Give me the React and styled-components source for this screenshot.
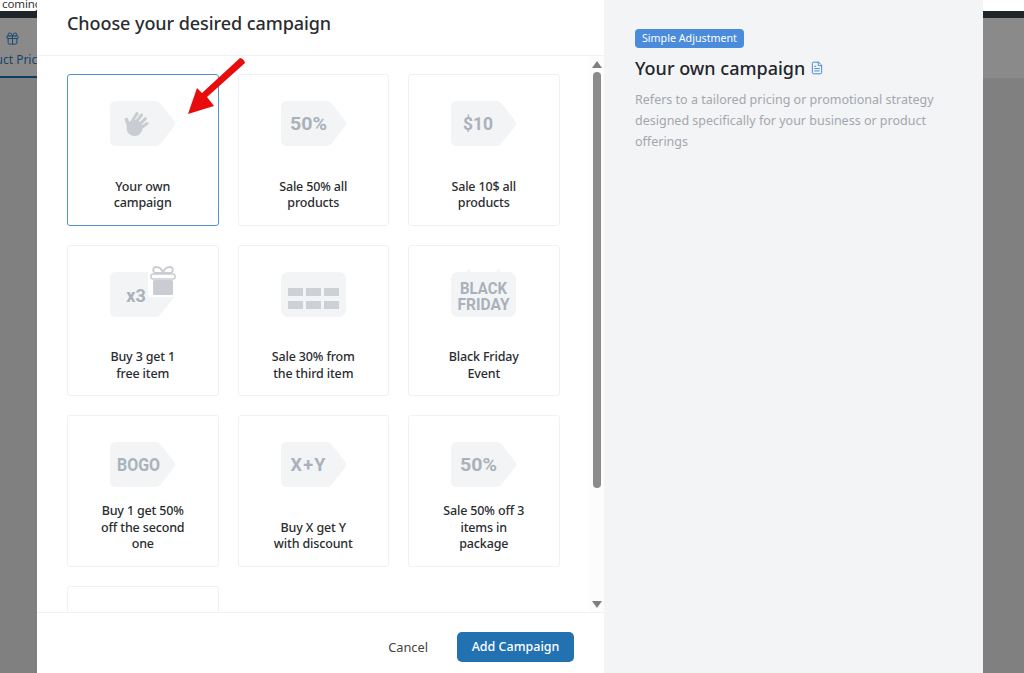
import React from 'react'
import styled, { createGlobalStyle } from 'styled-components'
import { Gift, FileText } from 'lucide-react'

const GlobalStyle = createGlobalStyle`
  html, body {
    margin: 0;
    height: 100%;
    overflow: hidden;
    font-family: "Noto Sans", "Open Sans", sans-serif;
  }
`

const Page = styled.div`
  position: relative;
  width: 1024px;
  height: 673px;
  overflow: hidden;
  background: #808080;
`

const TopBar = styled.div`
  height: 18px;
  background: #1f2529;
`

const Notice = styled.div`
  height: 11px;
  padding-left: 2px;
  overflow: hidden;
  background: #ffffff;
  color: #333;
  font-size: 11.5px;
  line-height: 8px;
  letter-spacing: -0.1px;
  white-space: nowrap;
`

const TabStrip = styled.div`
  height: 60px;
  box-sizing: border-box;
  background: #8a8a8a;
`

const Tab = styled.div`
  display: flex;
  flex-direction: column;
  align-items: center;
  width: 104px;
  height: 60px;
  box-sizing: border-box;
  margin-left: -40px;
  padding-top: 13px;
  gap: 5px;
  border-bottom: 2px solid #0e3f63;
  color: #15466b;
  font-size: 12px;
  line-height: 18px;
  white-space: nowrap;
`

const Modal = styled.div`
  position: absolute;
  top: 0;
  left: 37px;
  width: 946px;
  height: 673px;
  display: grid;
  grid-template-columns: 567px 379px;
  background: #ffffff;
`

const Main = styled.div`
  display: flex;
  flex-direction: column;
  min-height: 0;
`

const Header = styled.div`
  height: 55px;
  padding-left: 30px;
  border-bottom: 1px solid #f1f2f3;
  flex: none;
`

const Title = styled.h2`
  margin: 0;
  color: #2a2d31;
  font-size: 18px;
  font-weight: 500;
  line-height: 47px;
  letter-spacing: -0.07px;
`

const Body = styled.div`
  flex: 1;
  min-height: 0;
  display: flex;
`

const CardArea = styled.div`
  flex: 1;
  min-width: 0;
  overflow: hidden;
  padding: 18px 0 0 30px;
`

const CardGrid = styled.div`
  display: grid;
  grid-template-columns: repeat(3, 151.5px);
  grid-auto-rows: 151.5px;
  column-gap: 19px;
  row-gap: 19px;
`

const Card = styled.div`
  display: flex;
  flex-direction: column;
  align-items: center;
  box-sizing: border-box;
  padding: 26px 8px 13px;
  border: ${(p) => (p.$active ? '1.5px solid #5490d6' : '1.5px solid #f0f1f3')};
  border-radius: 3px;
  background: #fff;
`

const TagArt = styled.svg`
  display: block;
  flex: none;
  width: 65px;
  height: 45px;
  overflow: visible;
`

const TagText = styled.text`
  fill: #a9b2bb;
  font-family: Roboto, "Liberation Sans", sans-serif;
  font-weight: 700;
  text-anchor: middle;
`

const CardLabel = styled.div`
  margin-top: auto;
  color: #2a2d30;
  font-size: 12.5px;
  font-weight: 500;
  letter-spacing: -0.15px;
  line-height: 16.5px;
  text-align: center;
  white-space: pre-line;
`

const ScrollTrack = styled.div`
  flex: none;
  width: 14px;
  padding: 5px 0 4px;
  box-sizing: border-box;
  display: flex;
  flex-direction: column;
  align-items: center;
  background: #fcfcfc;
  height: 100%;
`

const ScrollThumb = styled.div`
  width: 8px;
  height: 416px;
  margin-top: 4px;
  border-radius: 4px;
  background: #8b8b8b;
`

const ScrollArrow = styled.div`
  width: 0;
  height: 0;
  border-left: 5px solid transparent;
  border-right: 5px solid transparent;
  ${(p) => (p.$down ? 'border-top: 7px solid #7f7f7f; margin-top: auto;' : 'border-bottom: 7px solid #7f7f7f;')}
`

const Footer = styled.div`
  flex: none;
  height: 61px;
  display: flex;
  align-items: center;
  justify-content: flex-end;
  gap: 29px;
  padding: 7px 30px 0 0;
  box-sizing: border-box;
  border-top: 1px solid #f1f2f3;
`

const CancelButton = styled.button`
  padding: 0;
  border: 0;
  background: none;
  color: #444;
  font: 400 12.8px "Noto Sans", sans-serif;
`

const AddButton = styled.button`
  width: 117px;
  height: 30px;
  padding: 0;
  border: 0;
  border-radius: 5px;
  background: #2271b1;
  color: #fff;
  font: 500 12.5px "Noto Sans", sans-serif;
`

const Side = styled.aside`
  background: #f3f4f6;
  padding: 29px 40px 0 31px;
`

const Badge = styled.span`
  display: block;
  width: fit-content;
  padding: 0 7px;
  height: 19px;
  border-radius: 4px;
  background: #4a8bdb;
  color: #fff;
  font-size: 10.7px;
  line-height: 19px;
`

const SideTitle = styled.h3`
  display: flex;
  align-items: center;
  gap: 5px;
  margin: 7px 0 0;
  color: #23262a;
  font-size: 18px;
  font-weight: 500;
  line-height: 26px;
`

const SideText = styled.p`
  margin: 8px 0 0;
  color: #a3a7ac;
  font-size: 12.5px;
  line-height: 21px;
`

const PointerArrow = styled.svg`
  position: absolute;
  top: 55px;
  left: 185px;
  width: 62px;
  height: 62px;
`

const TAG_PATH = 'M6 0H45Q49 0 51 3L64.4 20Q66 22.5 64.4 25L51 42Q49 45 45 45H6Q0 45 0 39V6Q0 0 6 0Z'

const TagShape = ({ children }) => (
  <TagArt viewBox="0 0 65 45">
    <path d={TAG_PATH} fill="#f3f4f6" />
    {children}
  </TagArt>
)

const HandIcon = () => (
  <g stroke="#c9ccd2" strokeLinecap="round" fill="none">
    <path d="M20 24L27 12.5" strokeWidth="3" />
    <path d="M23 25L31.5 14" strokeWidth="3" />
    <path d="M26 27L35.5 17.5" strokeWidth="3" />
    <path d="M28 29L37 22.5" strokeWidth="3" />
    <path d="M20.5 30L16.5 18.5" strokeWidth="3.6" />
    <circle cx="24.5" cy="27" r="8" fill="#c9ccd2" stroke="none" />
  </g>
)

const GiftIcon = () => (
  <g>
    <rect x="38" y="-3" width="29" height="28" rx="3" fill="#fff" />
    <path d="M46-5c-3 0-4 4-1 6h16c3-2 2-6-1-6-3 0-6 2-7 6-1-4-4-6-7-6Z" fill="none" stroke="#c9ccd2" strokeWidth="1.8" />
    <rect x="41" y="2" width="24" height="5" rx="2" fill="#fff" stroke="#c9ccd2" strokeWidth="1.6" />
    <rect x="43" y="8" width="20" height="15" rx="1.5" fill="#c9ccd2" />
  </g>
)

const campaigns = [
  {
    label: 'Your own\ncampaign',
    active: true,
    art: (
      <TagShape>
        <HandIcon />
      </TagShape>
    ),
  },
  {
    label: 'Sale 50% all\nproducts',
    art: (
      <TagShape>
        <TagText x="27.5" y="29" fontSize="18" textLength="37" lengthAdjust="spacingAndGlyphs">50%</TagText>
      </TagShape>
    ),
  },
  {
    label: 'Sale 10$ all\nproducts',
    art: (
      <TagShape>
        <TagText x="27" y="29" fontSize="18" textLength="30" lengthAdjust="spacingAndGlyphs">$10</TagText>
      </TagShape>
    ),
  },
  {
    label: 'Buy 3 get 1\nfree item',
    art: (
      <TagShape>
        <GiftIcon />
        <TagText x="26" y="30" fontSize="18">x3</TagText>
      </TagShape>
    ),
  },
  {
    label: 'Sale 30% from\nthe third item',
    art: (
      <TagArt viewBox="0 0 65 45">
        <rect width="65" height="45" rx="7" fill="#f3f4f6" />
        {[7, 25, 43].flatMap((x) =>
          [16, 29].map((y) => <rect key={`${x}-${y}`} x={x} y={y} width="15" height="8" fill="#cdd0d5" />)
        )}
      </TagArt>
    ),
  },
  {
    label: 'Black Friday\nEvent',
    art: (
      <TagArt viewBox="0 0 65 45">
        <rect x="16" y="-3" width="3" height="6" rx="1.5" fill="#f3f4f6" />
        <rect x="46" y="-3" width="3" height="6" rx="1.5" fill="#f3f4f6" />
        <rect width="65" height="45" rx="7" fill="#f3f4f6" />
        <TagText x="32.5" y="22" fontSize="16.5" textLength="47" lengthAdjust="spacingAndGlyphs">BLACK</TagText>
        <TagText x="32.5" y="38" fontSize="16.5" textLength="52" lengthAdjust="spacingAndGlyphs">FRIDAY</TagText>
      </TagArt>
    ),
  },
  {
    label: 'Buy 1 get 50%\noff the second\none',
    art: (
      <TagShape>
        <TagText x="28.5" y="29" fontSize="18" textLength="43" lengthAdjust="spacingAndGlyphs">BOGO</TagText>
      </TagShape>
    ),
  },
  {
    label: 'Buy X get Y\nwith discount',
    art: (
      <TagShape>
        <TagText x="27" y="29" fontSize="18" textLength="35" lengthAdjust="spacing">X+Y</TagText>
      </TagShape>
    ),
  },
  {
    label: 'Sale 50% off 3\nitems in\npackage',
    art: (
      <TagShape>
        <TagText x="27.5" y="29" fontSize="18" textLength="37" lengthAdjust="spacingAndGlyphs">50%</TagText>
      </TagShape>
    ),
  },
  { label: '' },
]

export default function App() {
  return (
    <Page>
      <GlobalStyle />
      <TopBar>
        <Notice>coming soon</Notice>
      </TopBar>
      <TabStrip>
        <Tab>
          <Gift size={15} strokeWidth={1.5} />
          Product Pricing
        </Tab>
      </TabStrip>

      <Modal>
        <Main>
          <Header>
            <Title>Choose your desired campaign</Title>
          </Header>
          <Body>
            <CardArea>
              <CardGrid>
                {campaigns.map((item, i) => (
                  <Card key={i} $active={item.active}>
                    {item.art}
                    <CardLabel>{item.label}</CardLabel>
                  </Card>
                ))}
              </CardGrid>
            </CardArea>
            <ScrollTrack>
              <ScrollArrow />
              <ScrollThumb />
              <ScrollArrow $down />
            </ScrollTrack>
          </Body>
          <Footer>
            <CancelButton>Cancel</CancelButton>
            <AddButton>Add Campaign</AddButton>
          </Footer>
        </Main>
        <Side>
          <Badge>Simple Adjustment</Badge>
          <SideTitle>
            Your own campaign
            <FileText size={14} color="#3f84d0" strokeWidth={1.6} />
          </SideTitle>
          <SideText>
            Refers to a tailored pricing or promotional strategy designed specifically for your business or product offerings
          </SideText>
        </Side>
      </Modal>

      <PointerArrow viewBox="185 55 62 62">
        <path d="M240 58C242 58 245 61 245 63L207 97L214 106L188 114L197 88L202 93Z" fill="#e80c0c" />
      </PointerArrow>
    </Page>
  )
}
